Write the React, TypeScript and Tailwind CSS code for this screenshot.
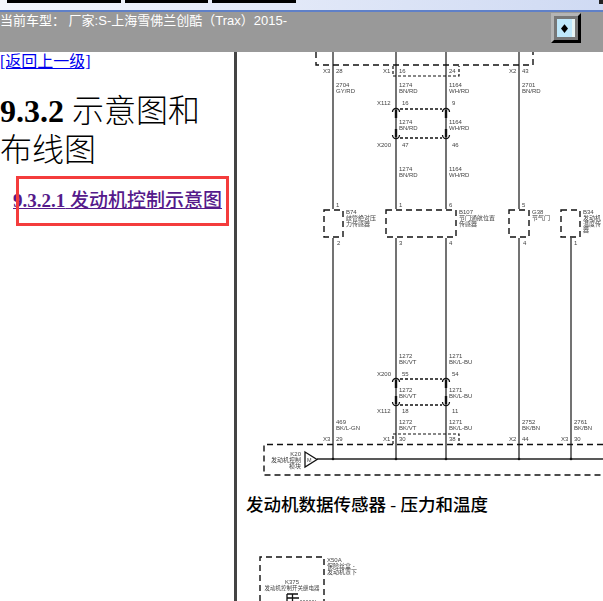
const wires: [number, number, number][] = [
  [333, 52, 209],
  [333, 238, 459],
  [396, 52, 209],
  [396, 238, 459],
  [446, 52, 209],
  [446, 238, 459],
  [519, 52, 209],
  [519, 238, 459],
  [571, 238, 459],
];

// x, y, text
const labels: [number, number, string][] = [
  [323, 73, 'X3'], [336, 73, '28'], [383, 73, 'X1'], [399, 73, '16'], [449, 73, '24'], [509, 73, 'X2'], [522, 73, '43'],
  [336, 87, '2704'], [336, 93, 'GY/RD'], [399, 87, '1274'], [399, 93, 'BN/RD'], [449, 87, '1164'], [449, 93, 'WH/RD'], [522, 87, '2701'], [522, 93, 'BN/RD'],
  [377, 105, 'X112'], [402, 105, '16'], [452, 105, '9'],
  [399, 124, '1274'], [399, 130, 'BN/RD'], [449, 124, '1164'], [449, 130, 'WH/RD'],
  [377, 147, 'X200'], [402, 147, '47'], [452, 147, '46'],
  [399, 171, '1274'], [399, 177, 'BN/RD'], [449, 171, '1164'], [449, 177, 'WH/RD'],
  [336, 207, '1'], [399, 207, '1'], [449, 207, '6'], [522, 207, '5'],
  [337, 245, '2'], [399, 245, '3'], [449, 245, '4'], [523, 245, '4'], [574, 245, '1'],
  [346, 214, 'B74'], [346, 220, '歧管绝对压'], [346, 226, '力传感器'],
  [459, 214, 'B107'], [459, 220, '节门通航位置'], [459, 226, '传感器'],
  [532, 214, 'G38'], [532, 220, '节气门'],
  [583, 214, 'B34'], [583, 220, '发动机'], [583, 226, '温度传'], [583, 232, '器'],
  [399, 358, '1272'], [399, 364, 'BK/VT'], [449, 358, '1271'], [449, 364, 'BK/L-BU'],
  [377, 376, 'X200'], [402, 376, '55'], [452, 376, '54'],
  [399, 392, '1272'], [399, 398, 'BK/VT'], [449, 392, '1271'], [449, 398, 'BK/L-BU'],
  [377, 413, 'X112'], [402, 413, '18'], [452, 413, '11'],
  [336, 424, '469'], [336, 430, 'BK/L-GN'], [399, 424, '1272'], [399, 430, 'BK/VT'], [449, 424, '1271'], [449, 430, 'BK/L-BU'],
  [522, 424, '2752'], [522, 430, 'BK/BN'], [574, 424, '2761'], [574, 430, 'BK/BN'],
  [323, 441, 'X3'], [336, 441, '29'], [383, 441, 'X1'], [399, 441, '30'], [449, 441, '38'], [509, 441, 'X2'], [522, 441, '44'], [561, 441, 'X3'], [574, 441, '30'],
];

const boxes: [number, number][] = [
  [324, 19],
  [386, 70],
  [509, 20],
  [561, 19],
];

// pair of inline connectors, cups open towards each other
function Connector({ top, bottom }: { top: number; bottom: number }) {
  return (
    <g fill="none" stroke="#111">
      {[396, 446].map((x) => (
        <g key={x}>
          <path d={`M${x - 3.5} ${top + 3} a3.5 3.5 0 0 1 7 0`} strokeWidth="1.3" />
          <path d={`M${x - 3.5} ${bottom - 3} a3.5 3.5 0 0 0 7 0`} strokeWidth="1.3" />
          <path d={`M${x} ${top + 1}v8M${x} ${bottom - 9}v8`} strokeWidth="2.4" />
        </g>
      ))}
      <path d={`M400 ${top}H442M400 ${bottom}H442`} strokeWidth="1.3" strokeDasharray="3 2" />
    </g>
  );
}

function Diagram() {
  return (
    <svg
      viewBox="237 52 366 430"
      className="block w-[366px] h-[430px] blur-[0.3px] font-['Liberation_Sans','Noto_Sans_CJK_SC',sans-serif]"
    >
      <g stroke="#444" strokeWidth="1.5">
        {wires.map(([x, y1, y2]) => (
          <line key={`${x}-${y1}`} x1={x} x2={x} y1={y1} y2={y2} />
        ))}
        <line x1="317" x2="603" y1="459" y2="459" stroke="#222" />
      </g>

      <g fill="none" stroke="#111" strokeWidth="1.4">
        <path d="M316 52V65H533V52" strokeDasharray="6 4" />
        <path d="M393 66V76H459V66" strokeWidth="1.2" strokeDasharray="3 2" />
        <path d="M393 444V434H459V444" strokeWidth="1.2" strokeDasharray="3 2" />
        <path d="M603 444.5H264V475H603" strokeDasharray="6 4" />
        {boxes.map(([x, w]) => (
          <rect key={x} x={x} y="210" width={w} height="27" strokeDasharray="6 4" />
        ))}
        <path d="M305 452L317 459.5L305 467Z" strokeWidth="1.3" />
      </g>

      <Connector top={109} bottom={138} />
      <Connector top={379} bottom={405} />

      <g fill="#111">
        {[333, 396, 446, 519, 571].map((x) => (
          <circle key={x} cx={x} cy="459" r="1.3" />
        ))}
      </g>

      <g fill="#444" fontSize="6">
        {labels.map(([x, y, t]) => (
          <text key={`${x}-${y}-${t}`} x={x} y={y}>
            {t}
          </text>
        ))}
        <text x="301" y="456" textAnchor="end">K20</text>
        <text x="301" y="462" textAnchor="end">发动机控制</text>
        <text x="301" y="468" textAnchor="end">模块</text>
        <text x="307" y="462" fontSize="5.5">M</text>
      </g>
    </svg>
  );
}

function RelayDiagram() {
  return (
    <svg
      viewBox="237 550 366 51"
      className="block w-[366px] h-[51px] blur-[0.3px] font-['Liberation_Sans','Noto_Sans_CJK_SC',sans-serif]"
    >
      <path d="M260 601V557H324V601" fill="none" stroke="#111" strokeWidth="1.4" strokeDasharray="6 4" />
      <g fill="#444" fontSize="6">
        <text x="327" y="562">X50A</text>
        <text x="327" y="568">保险丝盒 -</text>
        <text x="327" y="574">发动机罩下</text>
        <text x="292" y="584" textAnchor="middle">K375</text>
        <text x="292" y="590" textAnchor="middle" fontSize="5.5">发动机控制开关继电器</text>
      </g>
      <path d="M287 594V601M292.500 594V601M287 598H299M287 594H298" fill="none" stroke="#111" strokeWidth="1.3" />
      <path d="M300 600.500H316" stroke="#999" strokeWidth="1" strokeDasharray="2 1" />
    </svg>
  );
}

export default function App() {
  return (
    <div className="w-[603px] h-[601px] overflow-hidden flex flex-col bg-white font-['Liberation_Serif','Noto_Sans_CJK_SC',serif]">
      {/* window toolbar strip */}
      <div className="h-[10px] flex gap-[4px] pl-[7px] bg-gradient-to-r from-[#f4f6fc] to-[#cfdaf3]">
        <div className="w-[114px] h-[3px] bg-black" />
        <div className="w-[83px] h-[3px] bg-black" />
        <div className="w-[84px] h-[3px] bg-black" />
        <div className="ml-auto w-[4px] h-[4px] bg-[#222222]" />
      </div>
      <div className="h-[2px] bg-[#5f80c8]" />

      {/* car model bar */}
      <div className="h-[40px] flex justify-between bg-[#999999] pr-[22px]">
        <div className="text-[13px] leading-[16px] pt-[1px] text-white font-['Liberation_Sans','Noto_Sans_CJK_SC',sans-serif]">
          当前车型： 厂家:S-上海雪佛兰创酷（Trax）2015-
        </div>
        <button className="w-[30px] h-[30px] mt-[1px] flex border-[3px] border-t-[#b4b4b4] border-l-[#b4b4b4] border-r-black border-b-black">
          <span className="flex-1 border-[3px] border-[#777777] flex">
            <span className="flex-1 bg-[#bfe8fb] flex items-center justify-center border-r-[3px] border-[#e8f4f4] text-black">
              <svg viewBox="0 0 8 10" className="w-[7px] h-[9px]">
                <path d="M0 5L4 0L8 5L4 10Z" fill="#000" />
              </svg>
            </span>
          </span>
        </button>
      </div>

      <div className="flex-1 flex min-h-0">
        {/* left nav */}
        <div className="relative w-[234px] shrink-0 overflow-hidden">
          <a href="#" className="block pt-[1px] text-[16px] leading-[18px] text-[#0000ee] underline">
            [返回上一级]
          </a>
          <h1 className="mt-[21px] w-[205px] text-[32px] leading-[39px] text-black font-light">
            <span className="font-bold">9.3.2</span> 示意图和布线图
          </h1>
          <a href="#" className="block mt-[19px] ml-[13px] text-[19px] leading-[24px] font-medium text-[#551a8b] underline whitespace-nowrap">
            <span className="font-bold">9.3.2.1</span> 发动机控制示意图
          </a>
          <div className="absolute left-[16px] top-[124px] w-[213px] h-[50px] border-[3px] border-[#f43c3c]" />
        </div>

        <div className="w-[3px] shrink-0 bg-[#444444]" />

        {/* schematic */}
        <div className="flex-1 min-w-0 overflow-hidden">
          <Diagram />
          <h2 className="h-[68px] pt-[11px] pl-[9px] text-[17.500px] leading-[24px] font-medium text-black whitespace-nowrap">
            发动机数据传感器 - 压力和温度
          </h2>
          <RelayDiagram />
        </div>
      </div>
    </div>
  );
}
